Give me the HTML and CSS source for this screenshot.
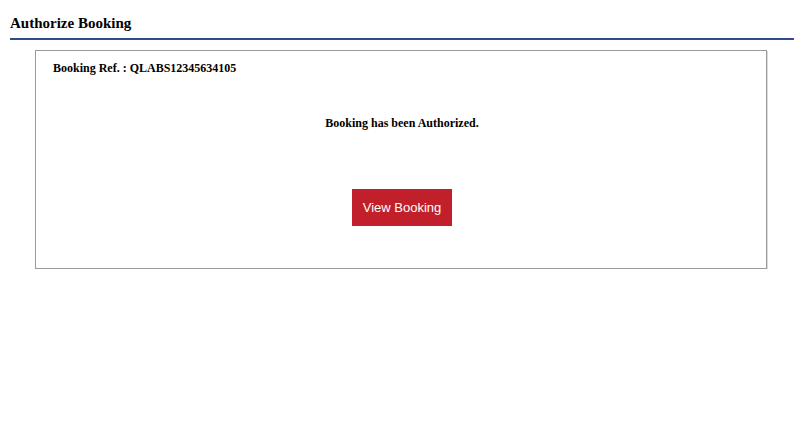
FILE: index.html
```html
<!DOCTYPE html>
<html>
<head>
<meta charset="utf-8">
<link rel="stylesheet" href="styles.css">
</head>
<body>
<div class="header"><h1 class="title">Authorize Booking</h1></div>
<div class="panel">
  <div class="ref">Booking Ref. : QLABS12345634105</div>
  <div class="msg">Booking has been Authorized.</div>
  <div class="actions"><button class="btn">View Booking</button></div>
</div>
</body>
</html>
```
FILE: styles.css
```css
html, body { margin: 0; padding: 0; background: #fff; }
body { font-family: "Liberation Serif", "Times New Roman", serif; color: #000; }
.header {
  margin: 0 6px 0 10px;
  padding-top: 15px;
  padding-bottom: 6px;
  border-bottom: 2px solid #2d4c8b;
}
.title { margin: 0; font-size: 15px; line-height: 17px; font-weight: bold; }
.panel {
  margin: 10px 33px 0 35px;
  border: 1px solid #9a9a9a;
  box-shadow: 1px 1px 0 #dcdcdc;
  height: 217px;
  box-sizing: content-box;
  padding: 0;
}
.ref { font-size: 12px; font-weight: bold; line-height: 14px; padding: 10px 0 0 17px; }
.msg { font-size: 12px; font-weight: bold; line-height: 14px; text-align: center; margin-top: 41px; padding-left: 2px; }
.actions { display: flex; justify-content: center; margin-top: 59px; }
.btn {
  width: 100px; height: 37px;
  background: #c1202a; color: #fff; border: none; border-radius: 0;
  font-family: "Liberation Sans", Arial, sans-serif; font-size: 13px;
  padding: 0 0 0 1px; margin-left: 1px;
}
```
